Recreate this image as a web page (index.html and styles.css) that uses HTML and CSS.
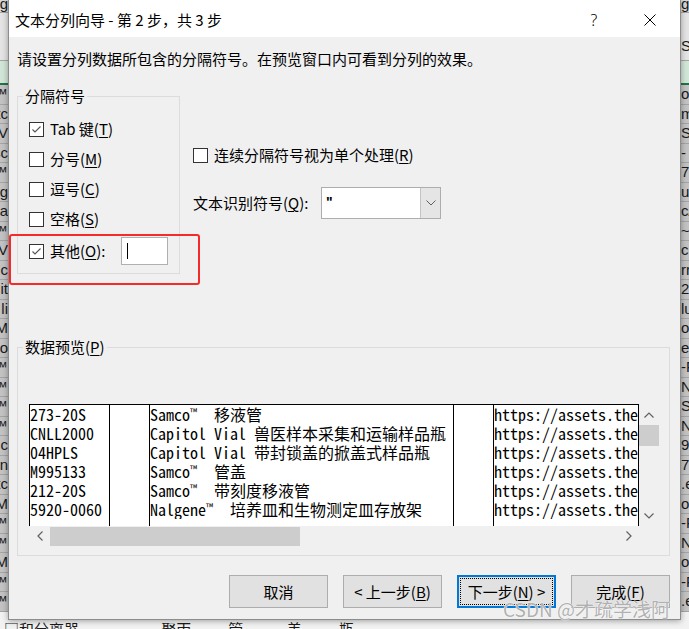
FILE: index.html
```html
<!DOCTYPE html>
<html lang="zh-CN">
<head>
<meta charset="utf-8">
<title>文本分列向导</title>
<link rel="stylesheet" href="styles.css">
</head>
<body>
<div class="desk">
  <div class="sheet">
    <div class="srow s-top"><span class="l">g</span><span class="m"></span><span class="r">g</span></div>
    <div class="srow s-fx"><span class="l"></span><span class="m"></span><span class="r"></span></div>
    <div class="srow s-fx2"><span class="l"></span><span class="m"></span><span class="r">S/</span></div>
    <div class="srow s-hdr"><span class="l"></span><span class="m"></span><span class="r"></span></div>
    <div class="srow"><span class="l">o™</span><span class="m"></span><span class="r">os</span></div>
    <div class="srow"><span class="l">tc</span><span class="m"></span><span class="r">m</span></div>
    <div class="srow"><span class="l">V</span><span class="m"></span><span class="r">Sc</span></div>
    <div class="srow"><span class="l">sc</span><span class="m"></span><span class="r">-</span></div>
    <div class="srow"><span class="l">o™</span><span class="m"></span><span class="r">76</span></div>
    <div class="srow"><span class="l">g</span><span class="m"></span><span class="r">uc</span></div>
    <div class="srow"><span class="l">a</span><span class="m"></span><span class="r">c/</span></div>
    <div class="srow"><span class="l">™</span><span class="m"></span><span class="r">~</span></div>
    <div class="srow"><span class="l">V</span><span class="m"></span><span class="r">c</span></div>
    <div class="srow"><span class="l">c</span><span class="m"></span><span class="r">rr</span></div>
    <div class="srow"><span class="l">it</span><span class="m"></span><span class="r">25</span></div>
    <div class="srow"><span class="l">li</span><span class="m"></span><span class="r">lu</span></div>
    <div class="srow"><span class="l">M</span><span class="m"></span><span class="r">o.</span></div>
    <div class="srow"><span class="l">lo</span><span class="m"></span><span class="r">er</span></div>
    <div class="srow"><span class="l">o™</span><span class="m"></span><span class="r">-F</span></div>
    <div class="srow"><span class="l">™</span><span class="m"></span><span class="r">N</span></div>
    <div class="srow"><span class="l">n™</span><span class="m"></span><span class="r">Sc</span></div>
    <div class="srow"><span class="l">™</span><span class="m"></span><span class="r">N</span></div>
    <div class="srow"><span class="l">c</span><span class="m"></span><span class="r">9-</span></div>
    <div class="srow"><span class="l">n</span><span class="m"></span><span class="r">79</span></div>
    <div class="srow"><span class="l">tc</span><span class="m"></span><span class="r">.e</span></div>
    <div class="srow"><span class="l">M</span><span class="m"></span><span class="r">o.</span></div>
    <div class="srow"><span class="l">o™</span><span class="m"></span><span class="r">-F</span></div>
    <div class="srow"><span class="l">™</span><span class="m"></span><span class="r">N</span></div>
    <div class="srow"><span class="l">M</span><span class="m"></span><span class="r">o.</span></div>
    <div class="srow"><span class="l">o™</span><span class="m"></span><span class="r">-F</span></div>
    <div class="srow"><span class="l">™</span><span class="m"></span><span class="r">.e</span></div>
    <div class="srow s-bottom"><span class="btxt">□和分离器 &nbsp; &nbsp; &nbsp; &nbsp; — &nbsp; &nbsp; &nbsp; &nbsp; &nbsp; 聚丙 &nbsp; &nbsp; &nbsp; &nbsp; &nbsp; 管 &nbsp; &nbsp; &nbsp; &nbsp; &nbsp; &nbsp; 盖 &nbsp; &nbsp; &nbsp; &nbsp; &nbsp; 瓶</span></div>
  </div>

  <div class="dialog">
    <div class="titlebar">
      <span class="title">文本分列向导 - 第 2 步，共 3 步</span>
      <span class="tb-help">?</span>
      <span class="tb-close"><svg width="12" height="12" viewBox="0 0 12 12"><path d="M0.5 0.5 L11.5 11.5 M11.5 0.5 L0.5 11.5" stroke="#000" stroke-width="1" fill="none"/></svg></span>
    </div>
    <div class="body">
      <p class="intro">请设置分列数据所包含的分隔符号。在预览窗口内可看到分列的效果。</p>
      <div class="top">
        <fieldset class="group delims">
          <legend>分隔符号</legend>
          <div class="rows">
            <div class="cb-row"><span class="cb"><svg width="13" height="13" viewBox="0 0 13 13"><polyline points="2.5,6.5 5,9 10.5,3.5" fill="none" stroke="#555" stroke-width="1.1"/></svg></span><span>Tab 键(<u>T</u>)</span></div>
            <div class="cb-row"><span class="cb"></span><span>分号(<u>M</u>)</span></div>
            <div class="cb-row"><span class="cb"></span><span>逗号(<u>C</u>)</span></div>
            <div class="cb-row"><span class="cb"></span><span>空格(<u>S</u>)</span></div>
            <div class="cb-row other"><span class="cb"><svg width="13" height="13" viewBox="0 0 13 13"><polyline points="2.5,6.5 5,9 10.5,3.5" fill="none" stroke="#555" stroke-width="1.1"/></svg></span><span class="otxt">其他(<u>O</u>):</span><span class="textbox"><span class="caret"></span></span></div>
          </div>
        </fieldset>
        <div class="opts">
          <div class="cb-row"><span class="cb"></span><span>连续分隔符号视为单个处理(<u>R</u>)</span></div>
          <div class="qual">
            <span class="qlabel">文本识别符号(<u>Q</u>):</span>
            <div class="combo"><span class="val">"</span><span class="drop"><svg width="10" height="6" viewBox="0 0 10 6"><polyline points="0.5,0.5 5,5 9.5,0.5" fill="none" stroke="#606060" stroke-width="1"/></svg></span></div>
          </div>
        </div>
      </div>

      <fieldset class="group preview">
        <legend>数据预览(<u>P</u>)</legend>
        <div class="pv-wrap">
          <div class="pv">
            <div class="table">
              <div class="col c1"><div class="cell">273-20S</div><div class="cell">CNLL2000</div><div class="cell">04HPLS</div><div class="cell">M995133</div><div class="cell">212-20S</div><div class="cell">5920-0060</div></div>
              <div class="col c2"></div>
              <div class="col c3"><div class="cell">Samco<span class="tm">™</span> 移液管</div><div class="cell">Capitol Vial 兽医样本采集和运输样品瓶</div><div class="cell">Capitol Vial 带封锁盖的掀盖式样品瓶</div><div class="cell">Samco<span class="tm">™</span> 管盖</div><div class="cell">Samco<span class="tm">™</span> 带刻度移液管</div><div class="cell">Nalgene<span class="tm">™</span> 培养皿和生物测定皿存放架</div></div>
              <div class="col c4"></div>
              <div class="col c5"><div class="cell">https://assets.the</div><div class="cell">https://assets.the</div><div class="cell">https://assets.the</div><div class="cell">https://assets.the</div><div class="cell">https://assets.the</div><div class="cell">https://assets.the</div></div>
            </div>
            <div class="vscroll">
              <span class="sbtn"><svg width="10" height="6" viewBox="0 0 10 6"><polyline points="0.5,5.5 5,1 9.5,5.5" fill="none" stroke="#606060" stroke-width="1.2"/></svg></span>
              <span class="vthumb"></span>
              <span class="vtrack"></span>
              <span class="sbtn"><svg width="10" height="6" viewBox="0 0 10 6"><polyline points="0.5,0.5 5,5 9.5,0.5" fill="none" stroke="#606060" stroke-width="1.2"/></svg></span>
            </div>
            <div class="hscroll">
              <span class="hbtn"><svg width="6" height="10" viewBox="0 0 6 10"><polyline points="5.5,0.5 1,5 5.5,9.5" fill="none" stroke="#606060" stroke-width="1.2"/></svg></span>
              <span class="hthumb"></span>
              <span class="htrack"></span>
              <span class="hbtn"><svg width="6" height="10" viewBox="0 0 6 10"><polyline points="0.5,0.5 5,5 0.5,9.5" fill="none" stroke="#606060" stroke-width="1.2"/></svg></span>
            </div>
            <div class="corner"></div>
          </div>
        </div>
      </fieldset>

      <div class="buttons">
        <button class="btn">取消</button>
        <button class="btn">&lt; 上一步(<u>B</u>)</button>
        <button class="btn focus">下一步(<u>N</u>) &gt;</button>
        <button class="btn">完成(<u>F</u>)</button>
      </div>
    </div>
  </div>

  <div class="annot"></div>
  <div class="wm">CSDN @才疏学浅阿</div>
</div>
</body>
</html>
```

FILE: styles.css
```css
* { box-sizing: border-box; }
html, body { margin: 0; padding: 0; }
body {
  width: 689px;
  height: 629px;
  overflow: hidden;
  font-family: "Noto Sans CJK SC", "Microsoft YaHei", sans-serif;
  font-size: 15px;
  color: #000;
  background: #c8c8c8;
}
u { text-decoration: underline; text-underline-offset: 2px; text-decoration-thickness: 1px; }

.desk {
  position: relative;
  display: grid;
  width: 689px;
  height: 629px;
  overflow: hidden;
}
.sheet, .dialog { grid-area: 1 / 1; }

/* background excel sheet */
.sheet {
  display: flex;
  flex-direction: column;
  font-family: "Liberation Sans", sans-serif;
  font-size: 15px;
  color: #1a1a1a;
  overflow: hidden;
  height: 629px;
}
.srow {
  display: grid;
  grid-template-columns: 8px 1fr 8px;
  height: 19.5px;
  flex: none;
  border-bottom: 1px solid #a4a4a4;
  background: #c3c3c3;
  line-height: 18px;
}
.srow .l { display: flex; justify-content: flex-end; overflow: hidden; white-space: nowrap; }
.srow .r { overflow: hidden; white-space: nowrap; }
.s-top { height: 13px; line-height: 8px; background: #d8d8d8; }
.s-fx { height: 24px; background: #e4e4e4; border-bottom: none; }
.s-fx2 { height: 24px; background: #e4e4e4; }
.s-hdr { height: 24px; background: #d2e6d8; border-bottom: 2px solid #217346; }
.s-bottom {
  display: block;
  height: 40px;
  background: #f2f2f2;
  border-bottom: none;
  padding-top: 7px;
  padding-left: 4px;
  font-family: "Noto Sans CJK SC", sans-serif;
  white-space: nowrap;
  line-height: 20px;
}

/* dialog */
.dialog {
  position: relative;
  z-index: 1;
  margin-left: 8px;
  width: 673px;
  height: 620px;
  background: #f0f0f0;
  border: 1px solid #8c8c8c;
  border-top: none;
  box-shadow: 0 1px 6px rgba(0, 0, 0, 0.35);
  display: flex;
  flex-direction: column;
}
.titlebar {
  height: 37px;
  flex: none;
  background: #fff;
  display: flex;
  align-items: center;
  padding: 2px 7px 0 6px;
}
.title { line-height: 20px; flex: 1; }
.tb-help {
  width: 46px;
  text-align: center;
  font-family: "Noto Sans", sans-serif;
  font-weight: 300;
  font-size: 16px;
  line-height: 20px;
}
.tb-close {
  width: 46px;
  margin-left: 10px;
  display: flex;
  justify-content: center;
  align-items: center;
  height: 20px;
}

.body {
  flex: 1;
  padding: 12px 10px 0 8px;
  display: flex;
  flex-direction: column;
}
.intro { margin: 0; line-height: 20px; }

.top { display: flex; margin-top: 17px; }

.group {
  margin: 0;
  padding: 0;
  border: 1px solid #dcdcdc;
  min-width: 0;
}
.group legend {
  margin-left: 5px;
  padding: 0 2px;
  line-height: 20px;
}

.delims { width: 163px; }
.rows {
  padding: 8px 0 7px 11px;
  display: flex;
  flex-direction: column;
}
.cb-row {
  display: flex;
  align-items: center;
  height: 30px;
  line-height: 20px;
  white-space: nowrap;
}
.cb {
  width: 15px;
  height: 15px;
  flex: none;
  border: 1px solid #333;
  background: #fff;
  margin-right: 6px;
  display: flex;
  align-items: center;
  justify-content: center;
}
.other { margin-top: 2px; }
.otxt { width: 71px; flex: none; }
.textbox {
  width: 47px;
  height: 28px;
  flex: none;
  background: #fff;
  border: 1px solid #b0b0b0;
  display: flex;
  align-items: center;
  padding-left: 5px;
}
.caret { width: 1px; height: 16px; background: #000; }

.opts {
  margin-left: 13px;
  padding-top: 54px;
  display: flex;
  flex-direction: column;
}
.qual {
  display: flex;
  align-items: center;
  margin-top: 17px;
}
.qlabel { width: 128px; line-height: 20px; white-space: nowrap; }
.combo {
  width: 120px;
  height: 32px;
  border: 1px solid #adadad;
  background: #fff;
  display: flex;
}
.combo .val {
  flex: 1;
  padding-left: 4px;
  font-weight: 700;
  line-height: 28px;
  font-family: "Liberation Sans", sans-serif;
  font-size: 14px;
}
.combo .drop {
  width: 20px;
  background: #e5e5e5;
  border-left: 1px solid #c4c4c4;
  display: flex;
  align-items: center;
  justify-content: center;
}

/* preview */
.preview { margin-top: 63px; width: 653px; }
.pv-wrap { padding: 47px 0 9px 11px; }
.pv {
  display: grid;
  grid-template-columns: 610px 20px;
  grid-template-rows: 122px 20px;
  width: 630px;
}
.table {
  background: #fff;
  border-top: 1px solid #000;
  border-right: 1px solid #000;
  display: flex;
  overflow: hidden;
  font-family: "Noto Sans Mono CJK SC", "Noto Sans CJK SC", monospace;
  font-size: 16px;
  line-height: 19px;
  white-space: nowrap;
}
.col {
  border-left: 1px solid #000;
  padding-top: 0;
  overflow: hidden;
  flex: none;
}
.cell { height: 19px; overflow: hidden; }
.c1 { width: 80px; }
.c2 { width: 40px; }
.c3 { width: 304px; }
.c4 { width: 40px; }
.c5 { flex: 1; }
.tm {
  display: inline-block;
  width: 16px;
  font-size: 10px;
  line-height: 0;
  vertical-align: 5px;
}

.vscroll {
  background: #f0f0f0;
  display: flex;
  flex-direction: column;
}
.sbtn {
  height: 21px;
  flex: none;
  display: flex;
  align-items: center;
  justify-content: center;
}
.vthumb { height: 21px; flex: none; background: #cdcdcd; }
.vtrack { flex: 1; }
.hscroll {
  background: #f0f0f0;
  display: flex;
}
.hbtn {
  width: 21px;
  flex: none;
  display: flex;
  align-items: center;
  justify-content: center;
}
.hthumb { width: 250px; flex: none; background: #cdcdcd; margin: 1px 0 0; }
.htrack { flex: 1; }
.corner { background: #f0f0f0; }

/* buttons */
.buttons {
  display: flex;
  justify-content: flex-end;
  gap: 15px;
  margin-top: 19px;
}
.btn {
  width: 99px;
  height: 33px;
  background: #e1e1e1;
  border: 1px solid #adadad;
  font-family: "Noto Sans CJK SC", sans-serif;
  font-size: 15px;
  color: #000;
  padding: 0;
  line-height: 20px;
}
.btn.focus {
  border: 2px solid #0078d7;
  outline: 1px dotted #000;
  outline-offset: -4px;
}

/* overlays */
.annot {
  position: absolute;
  left: 9px;
  top: 234px;
  width: 191px;
  height: 51px;
  border: 2px solid #f52b2b;
  border-radius: 3px;
  z-index: 2;
}
.wm {
  position: absolute;
  left: 503px;
  top: 597px;
  z-index: 3;
  font-family: "Noto Sans CJK SC", sans-serif;
  font-size: 19px;
  line-height: 24px;
  color: rgba(150, 150, 150, 0.75);
  text-shadow: 0 0 1px #fff, 0 0 1px #fff;
  white-space: nowrap;
}
```
